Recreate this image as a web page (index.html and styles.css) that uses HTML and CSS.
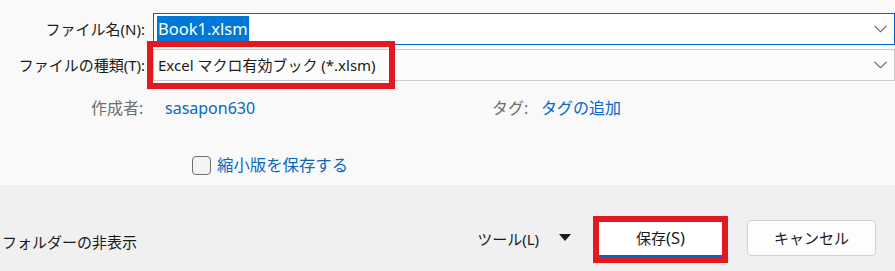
FILE: index.html
```html
<!DOCTYPE html>
<html lang="ja">
<head>
<meta charset="utf-8">
<link rel="stylesheet" href="styles.css">
</head>
<body>
<div class="dialog">
  <section class="fields">
    <div class="row">
      <label class="label">ファイル名(N):</label>
      <div class="combo combo-active">
        <span class="sel">Book1.xlsm</span>
        <svg class="chev" width="13" height="8" viewBox="0 0 13 8"><polyline points="0.5,0.8 6.5,6.8 12.5,0.8" fill="none" stroke="#5f5f5f" stroke-width="1.1"/></svg>
      </div>
    </div>
    <div class="row">
      <label class="label">ファイルの種類(T):</label>
      <div class="combo">
        <span class="val">Excel マクロ有効ブック (*.xlsm)</span>
        <svg class="chev" width="13" height="8" viewBox="0 0 13 8"><polyline points="0.5,0.8 6.5,6.8 12.5,0.8" fill="none" stroke="#5f5f5f" stroke-width="1.1"/></svg>
        <span class="mark"></span>
      </div>
    </div>
    <div class="meta">
      <span class="meta-label author-label">作成者:</span>
      <span class="meta-value author-value">sasapon630</span>
      <span class="meta-label tag-label">タグ:</span>
      <span class="meta-value">タグの追加</span>
    </div>
    <label class="thumb"><span class="box"></span><span class="thumb-text">縮小版を保存する</span></label>
  </section>
  <footer class="actions">
    <span class="hide-folders">フォルダーの非表示</span>
    <span class="tools">ツール(L)</span>
    <span class="tri"></span>
    <button class="btn btn-primary">保存<span class="lat">(S)</span></button>
    <button class="btn btn-cancel">キャンセル</button>
  </footer>
</div>
</body>
</html>
```

FILE: styles.css
```css
html, body {
  margin: 0;
  padding: 0;
}
body {
  width: 895px;
  height: 271px;
  overflow: hidden;
  background: #f9f9f9;
  font-family: "Noto Sans", "Noto Sans CJK JP", sans-serif;
  font-size: 15px;
  color: #1b1b1b;
}
.dialog {
  display: flex;
  flex-direction: column;
  height: 271px;
}
.fields {
  height: 185px;
  box-sizing: border-box;
  padding-top: 13px;
  background: #f9f9f9;
}
.row {
  display: flex;
  align-items: center;
  height: 32px;
  margin-bottom: 4px;
}
.label {
  flex: 0 0 153px;
  box-sizing: border-box;
  padding-right: 8px;
  text-align: right;
  line-height: 20px;
  white-space: nowrap;
}
.combo {
  position: relative;
  flex: 1;
  height: 32px;
  box-sizing: border-box;
  border: 1px solid #cbcbcb;
  background: #fcfcfc;
  display: flex;
  align-items: center;
  padding-left: 3px;
}
.combo-active {
  border-color: #0067c0;
  background: #ffffff;
}
.sel {
  background: #0078d7;
  color: #ffffff;
  font-size: 16.5px;
  line-height: 26px;
  padding: 0 1px;
}
.val {
  line-height: 20px;
  padding-left: 1px;
  white-space: nowrap;
}
.chev {
  margin-left: auto;
  margin-right: 7px;
}
.mark {
  position: absolute;
  left: -7px;
  top: -9px;
  width: 248px;
  height: 48px;
  box-sizing: border-box;
  border: 6px solid #e21a1f;
}
.meta {
  display: flex;
  padding-left: 91px;
  margin-top: 17px;
  font-size: 16px;
  line-height: 20px;
  white-space: nowrap;
}
.meta-label {
  color: #6e6e6e;
}
.meta-value {
  color: #0a67c4;
}
.author-label {
  width: 74px;
}
.author-value {
  width: 327px;
}
.tag-label {
  width: 49px;
}
.thumb {
  display: flex;
  align-items: center;
  gap: 6px;
  margin-left: 192px;
  margin-top: 37px;
  height: 20px;
  width: max-content;
}
.box {
  width: 19px;
  height: 19px;
  box-sizing: border-box;
  border: 1px solid #6f6f6f;
  border-radius: 4px;
  background: #f3f3f3;
}
.thumb-text {
  color: #0a67c4;
  font-size: 16.4px;
  line-height: 20px;
}
.actions {
  flex: 1;
  display: flex;
  align-items: center;
  box-sizing: border-box;
  padding: 22px 19px 0 2px;
  background: #f0f0f0;
}
.hide-folders {
  margin-right: auto;
  margin-top: 6px;
  line-height: 20px;
}
.tools {
  line-height: 20px;
}
.tri {
  width: 0;
  height: 0;
  border-left: 6.5px solid transparent;
  border-right: 6.5px solid transparent;
  border-top: 7px solid #1b1b1b;
  margin-left: 20px;
  margin-right: 28px;
  margin-top: -3px;
}
.btn {
  font-family: inherit;
  font-size: 15px;
  color: #1b1b1b;
  padding: 0;
  line-height: 20px;
}
.lat {
  font-size: 16.5px;
}
.btn-primary {
  width: 123px;
  height: 35px;
  background: #ffffff;
  border: none;
  border-bottom: 2px solid #0067c0;
  outline: 6px solid #e21a1f;
  margin-right: 25px;
}
.btn-cancel {
  width: 129px;
  height: 36px;
  background: #fdfdfd;
  border: 1px solid #d0d0d0;
  border-radius: 4px;
  margin-top: -2px;
}
```
